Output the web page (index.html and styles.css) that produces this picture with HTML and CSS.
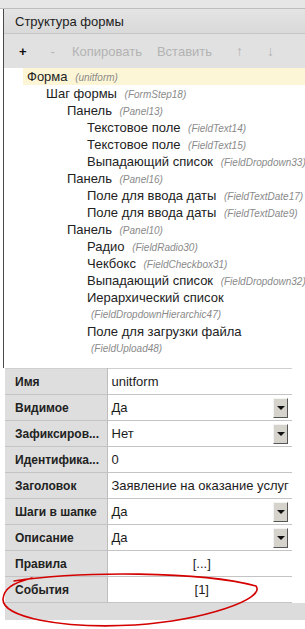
FILE: index.html
```html
<!DOCTYPE html>
<html lang="ru">
  <head>
    <meta charset="UTF-8" />
    <title>Структура формы</title>
    <link rel="stylesheet" href="styles.css">
  </head>
  <body>
    <div class="page">
      <div class="top-strip"></div>

      <div class="structure">
        <div class="title">Структура формы</div>

        <div class="toolbar">
          <span class="tool tool-on">+</span>
          <span class="tool tool-minus">-</span>
          <span class="tool">Копировать</span>
          <span class="tool tool-paste">Вставить</span>
          <span class="tool tool-up">↑</span>
          <span class="tool tool-down">↓</span>
        </div>

        <ul class="tree">
          <li class="node lvl0 selected">Форма <i>(unitform)</i></li>
          <li class="node lvl1">Шаг формы <i>(FormStep18)</i></li>
          <li class="node lvl2">Панель <i>(Panel13)</i></li>
          <li class="node lvl3">Текстовое поле <i>(FieldText14)</i></li>
          <li class="node lvl3">Текстовое поле <i>(FieldText15)</i></li>
          <li class="node lvl3">Выпадающий список <i>(FieldDropdown33)</i></li>
          <li class="node lvl2">Панель <i>(Panel16)</i></li>
          <li class="node lvl3">Поле для ввода даты <i>(FieldTextDate17)</i></li>
          <li class="node lvl3">Поле для ввода даты <i>(FieldTextDate9)</i></li>
          <li class="node lvl2">Панель <i>(Panel10)</i></li>
          <li class="node lvl3">Радио <i>(FieldRadio30)</i></li>
          <li class="node lvl3">Чекбокс <i>(FieldCheckbox31)</i></li>
          <li class="node lvl3">Выпадающий список <i>(FieldDropdown32)</i></li>
          <li class="node lvl3 wrap">Иерархический список <i>(FieldDropdownHierarchic47)</i></li>
          <li class="node lvl3 wrap">Поле для загрузки файла <i>(FieldUpload48)</i></li>
        </ul>
      </div>

      <table class="props">
        <tr>
          <th>Имя</th>
          <td><div class="val">unitform</div></td>
        </tr>
        <tr>
          <th>Видимое</th>
          <td><div class="val select"><span>Да</span><b class="arrow"></b></div></td>
        </tr>
        <tr>
          <th>Зафиксиров...</th>
          <td><div class="val select"><span>Нет</span><b class="arrow"></b></div></td>
        </tr>
        <tr>
          <th>Идентифика...</th>
          <td><div class="val">0</div></td>
        </tr>
        <tr>
          <th>Заголовок</th>
          <td><div class="val">Заявление на оказание услуг</div></td>
        </tr>
        <tr>
          <th>Шаги в шапке</th>
          <td><div class="val select"><span>Да</span><b class="arrow"></b></div></td>
        </tr>
        <tr>
          <th>Описание</th>
          <td><div class="val select"><span>Да</span><b class="arrow"></b></div></td>
        </tr>
        <tr>
          <th>Правила</th>
          <td><div class="val center">[...]</div></td>
        </tr>
        <tr>
          <th>События</th>
          <td><div class="val center">[1]</div></td>
        </tr>
      </table>

      <div class="footer-band"></div>

      <!-- hand drawn mark over the "События" row -->
      <svg class="mark" width="305" height="629" viewBox="0 0 305 629">
        <path d="M 14 581 C 80 571, 200 571, 256 586 C 266 599, 205 620, 135 625 C 60 629, 2 617, 3 599 C 4 589, 12 583, 32 578"
              fill="none" stroke="#d40000" stroke-width="1.6" stroke-linecap="round" />
      </svg>
    </div>
  </body>
</html>
```

FILE: styles.css
```css
* {
  margin: 0;
  padding: 0;
  box-sizing: border-box;
}

body {
  background: #fff;
  font-family: "Liberation Sans", Arial, sans-serif;
  color: #222;
}

.page {
  position: relative;
  width: 305px;
  height: 629px;
  overflow: hidden;
}

.top-strip {
  height: 9px;
  background: #e6e6e6;
  border-bottom: 1px solid #bdbdbd;
}

/* Form structure block */
.structure {
  margin-left: 3px;
  border-left: 1px solid #4a4a4a;
  height: 359px;
}

.title {
  height: 25px;
  padding: 5px 0 0 11px;
  font-size: 13px;
  color: #1c1c1c;
  background: linear-gradient(#e4e4e4, #d9d9d9);
  border-bottom: 1px solid #c6c6c6;
}

.toolbar {
  height: 34px;
  display: flex;
  align-items: center;
  padding-left: 15px;
  background: #e1e1e1;
  font-size: 13px;
}

.tool {
  color: #b3b3b3;
  margin-right: 14px;
}

.tool-on {
  color: #111;
  font-weight: bold;
  margin-right: 24px;
}

.tool-minus {
  margin-right: 17px;
}

.tool-paste {
  margin-left: 1px;
}

.tool-up {
  margin-left: 10px;
  margin-right: 24px;
  font-size: 14px;
}

.tool-down {
  font-size: 14px;
}

/* Tree */
.tree {
  list-style: none;
  font-size: 13px;
  color: #222;
}

.node {
  margin-left: 19px;
  line-height: 17px;
  white-space: nowrap;
}

.node i {
  font-size: 10px;
  line-height: 10px;
  color: #8a8a8a;
  margin-left: 4px;
}

.node.wrap {
  white-space: normal;
  padding-right: 20px;
}

.node.wrap i {
  display: block;
  line-height: 17px;
  margin-left: 4px;
}

.selected {
  background: #fdf6d6;
}

.lvl0 { padding-left: 4px; }
.lvl1 { padding-left: 23px; }
.lvl2 { padding-left: 44px; }
.lvl3 { padding-left: 64px; }

/* Property grid */
.props {
  margin-left: 5px;
  width: 287px;
  border-collapse: collapse;
  border-top: 1px solid #cfcfcf;
}

.props tr {
  height: 26px;
}

.props th {
  width: 102px;
  padding-left: 10px;
  text-align: left;
  font-size: 12px;
  font-weight: bold;
  color: #222;
  background: #dedede;
  border-bottom: 1px solid #c4c4c4;
  border-right: 1px solid #bdbdbd;
  white-space: nowrap;
}

.props td {
  padding: 0;
  border-bottom: 1px solid #c4c4c4;
  background: #fff;
  font-size: 13px;
  color: #1c1c1c;
}

.val {
  height: 25px;
  padding-left: 4px;
  display: flex;
  align-items: center;
  white-space: nowrap;
}

.select {
  justify-content: space-between;
  padding-right: 4px;
}

.center {
  justify-content: center;
}

.arrow {
  width: 15px;
  height: 20px;
  background: #d6d3cc;
  border: 1px solid;
  border-color: #f4f4f4 #555 #555 #f4f4f4;
  display: flex;
  align-items: center;
  justify-content: center;
}

.arrow::after {
  content: "";
  border-left: 4px solid transparent;
  border-right: 4px solid transparent;
  border-top: 4px solid #111;
}

.footer-band {
  margin-left: 5px;
  height: 17px;
  background: #dcdcdc;
}

.mark {
  position: absolute;
  left: 0;
  top: 0;
  pointer-events: none;
}
```
